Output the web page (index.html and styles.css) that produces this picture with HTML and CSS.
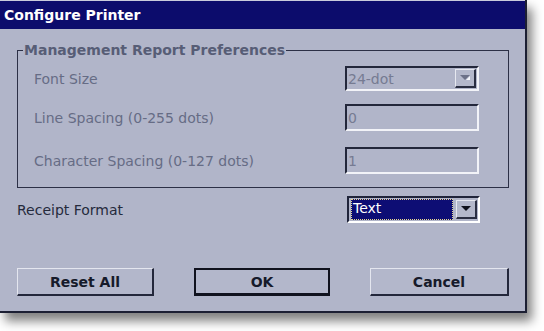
FILE: index.html
```html
<!DOCTYPE html>
<html>
<head>
<meta charset="utf-8">
<link rel="stylesheet" href="styles.css">
</head>
<body>
<div class="dialog">
  <div class="titlebar">Configure Printer</div>
  <div class="client">
    <fieldset class="group">
      <legend class="group-title">Management Report Preferences</legend>
      <div class="row row-first">
        <span class="label disabled">Font Size</span>
        <div class="field combo disabled-field">
          <span class="value">24-dot</span>
          <span class="drop drop-disabled">
            <svg width="10" height="6" viewBox="0 0 10 6"><path d="M0 0H10L5 5Z" fill="#6c7188"/><path d="M6 5L10 1V5Z" fill="#f4f5fa"/></svg>
          </span>
        </div>
      </div>
      <div class="row row-second">
        <span class="label disabled">Line Spacing (0-255 dots)</span>
        <div class="field disabled-field tall"><span class="value">0</span></div>
      </div>
      <div class="row row-third">
        <span class="label disabled">Character Spacing (0-127 dots)</span>
        <div class="field disabled-field tall"><span class="value">1</span></div>
      </div>
    </fieldset>
    <div class="receipt">
      <span class="label">Receipt Format</span>
      <div class="field combo active">
        <span class="selected">Text</span>
        <span class="drop">
          <svg width="10" height="6" viewBox="0 0 10 6"><path d="M0 0H10L5 5Z" fill="#10121c"/></svg>
        </span>
      </div>
    </div>
    <div class="buttons">
      <button class="btn btn-reset">Reset All</button>
      <button class="btn btn-ok">OK</button>
      <button class="btn btn-cancel">Cancel</button>
    </div>
  </div>
</div>
</body>
</html>
```

FILE: styles.css
```css
html, body {
  margin: 0;
  padding: 0;
  background: #ffffff;
}
body {
  width: 544px;
  height: 331px;
  overflow: hidden;
  font-family: "DejaVu Sans", sans-serif;
}
.dialog {
  width: 525px;
  height: 311px;
  background: #b1b5c9;
  border-right: 2px solid #1c1f33;
  border-bottom: 2px solid #1c1f33;
  box-shadow: 5px 8px 10px rgba(0, 0, 0, 0.5);
  display: flex;
  flex-direction: column;
}
.titlebar {
  box-sizing: border-box;
  height: 29px;
  border-top: 1px solid #c9cbdc;
  background: #0c0c6c;
  color: #ffffff;
  font-weight: bold;
  font-size: 14px;
  line-height: 28px;
  padding-left: 4px;
}
.client {
  display: flex;
  flex-direction: column;
  padding-left: 17px;
}
.group {
  margin: 13px 0 0 0;
  width: 492px;
  box-sizing: border-box;
  border: 1px solid #2c3046;
  padding: 0 0 13px 5px;
  min-width: 0;
}
.group-title {
  padding: 0 1px 0 1px;
  margin-left: 0;
  font-weight: bold;
  font-size: 14px;
  line-height: 16px;
  color: #575d76;
}
.row {
  display: grid;
  grid-template-columns: 1fr 134px;
  align-items: center;
  padding-left: 11px;
  padding-right: 29px;
}
.row-first { margin-top: 8px; }
.row-second { margin-top: 13px; }
.row-third { margin-top: 16px; }
.label {
  font-size: 14px;
  color: #252a3c;
}
.label.disabled {
  color: #666c85;
}
.field {
  box-sizing: border-box;
  height: 25px;
  border-top: 2px solid #23273b;
  border-left: 2px solid #23273b;
  border-bottom: 2px solid #f2f3f8;
  border-right: 2px solid #f2f3f8;
  display: flex;
  align-items: center;
  font-size: 14px;
}
.field.tall {
  height: 27px;
}
.disabled-field .value {
  color: #767b92;
  padding-left: 1px;
}
.combo {
  justify-content: space-between;
  padding-right: 1px;
}
.drop {
  width: 21px;
  height: 19px;
  box-sizing: border-box;
  background: #b4b8cb;
  border-top: 1px solid #e6e8f0;
  border-left: 1px solid #e6e8f0;
  border-bottom: 2px solid #2a2e42;
  border-right: 2px solid #2a2e42;
  display: flex;
  align-items: center;
  justify-content: center;
}
.receipt {
  display: flex;
  justify-content: space-between;
  align-items: center;
  margin-top: 8px;
  width: 492px;
  padding-right: 29px;
  box-sizing: border-box;
}
.receipt .field {
  width: 133px;
  height: 27px;
  border-color: #20243a #ffffff #ffffff #20243a;
  background: #b1b5c9;
  padding: 1px 1px 1px 2px;
}
.selected {
  flex: 1;
  align-self: stretch;
  background: #0d0d74;
  color: #ffffff;
  outline: 1px dotted #e8d890;
  outline-offset: -1px;
  line-height: 19px;
  padding-left: 2px;
  margin-right: 3px;
}
.buttons {
  display: flex;
  margin-top: 45px;
  width: 492px;
  justify-content: space-between;
}
.btn {
  height: 28px;
  box-sizing: border-box;
  background: #b3b7cb;
  font-family: "DejaVu Sans", sans-serif;
  font-weight: bold;
  font-size: 14px;
  color: #161a2a;
  border-top: 1px solid #e4e6ef;
  border-left: 1px solid #e4e6ef;
  border-bottom: 2px solid #23273b;
  border-right: 2px solid #23273b;
  padding: 0;
}
.btn-reset { width: 137px; }
.btn-ok {
  width: 136px;
  border: 2px solid #10121e;
  border-bottom-width: 3px;
}
.btn-cancel { width: 139px; }
```
